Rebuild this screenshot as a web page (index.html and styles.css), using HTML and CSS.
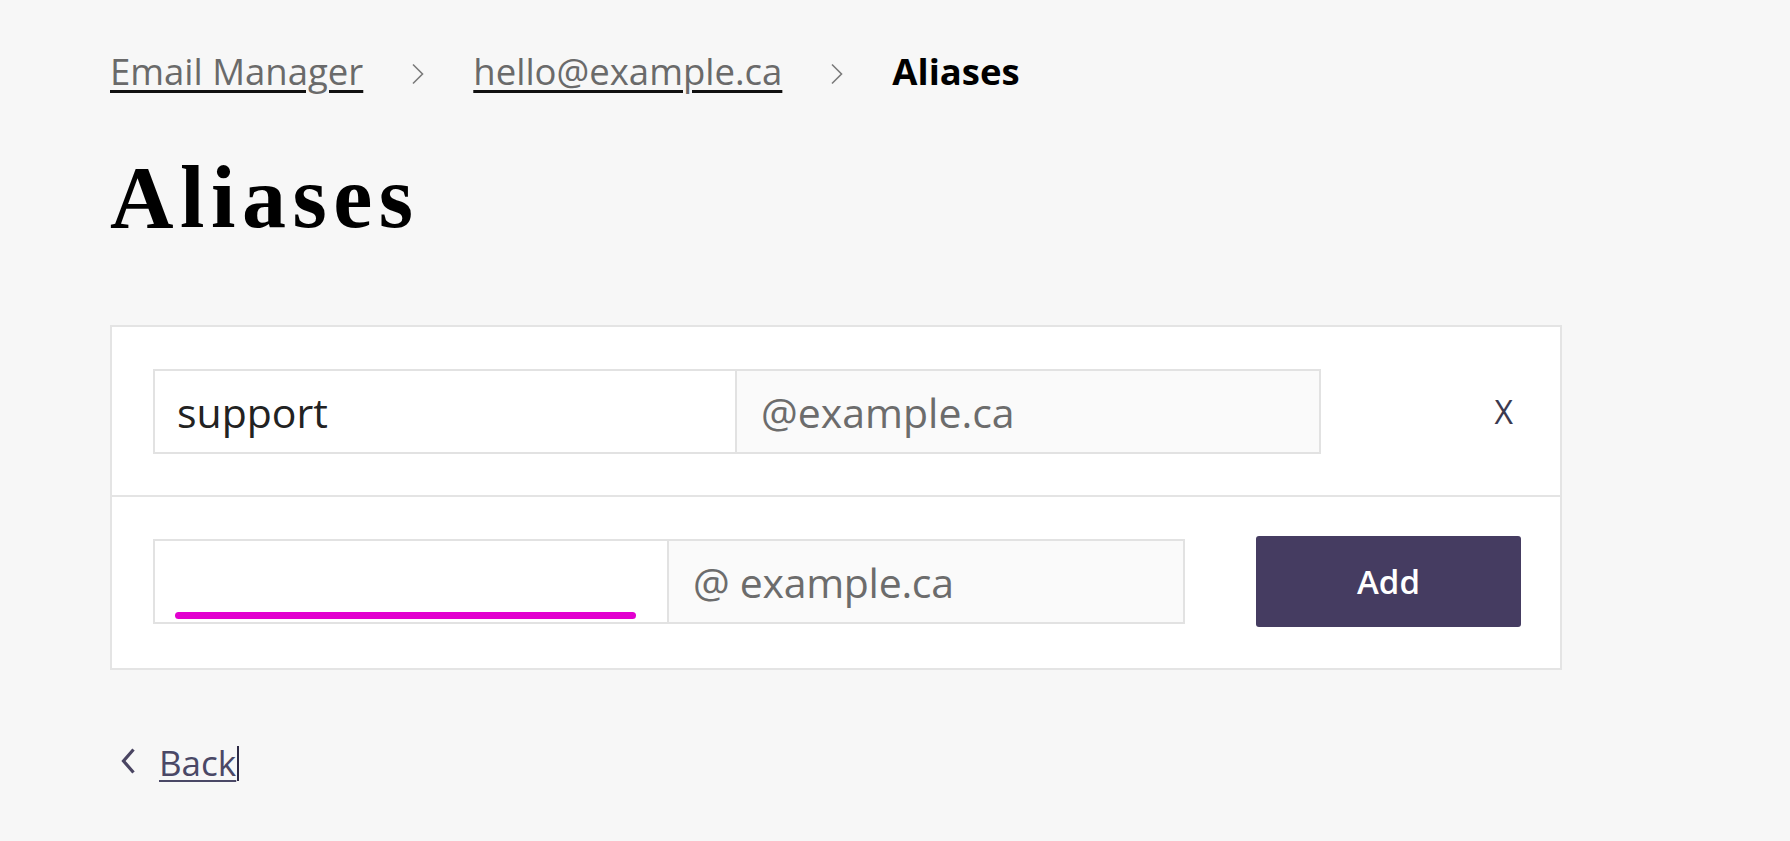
FILE: index.html
```html
<!DOCTYPE html>
<html lang="en">
<head>
<meta charset="utf-8">
<title>Aliases</title>
<link rel="stylesheet" href="styles.css">
</head>
<body>
<main class="page">
  <nav class="crumbs" aria-label="Breadcrumb">
    <a class="crumb-link" href="#">Email Manager</a>
    <span class="sep"><svg width="14" height="22" viewBox="0 0 14 22"><path d="M2 1.5 L11.5 11 L2 20.5" fill="none" stroke="#7a7a7a" stroke-width="1.6"/></svg></span>
    <a class="crumb-link" href="#">hello@example.ca</a>
    <span class="sep"><svg width="14" height="22" viewBox="0 0 14 22"><path d="M2 1.5 L11.5 11 L2 20.5" fill="none" stroke="#7a7a7a" stroke-width="1.6"/></svg></span>
    <span class="crumb-current">Aliases</span>
  </nav>

  <h1 class="title">Aliases</h1>

  <section class="card">
    <div class="row">
      <div class="fields fields-wide">
        <div class="box name">support</div>
        <div class="box suffix">@example.ca</div>
      </div>
      <button class="remove" type="button">X</button>
    </div>
    <div class="row row-last">
      <div class="fields fields-narrow">
        <div class="box name focused"><span class="focus-bar"></span></div>
        <div class="box suffix">@ example.ca</div>
      </div>
      <button class="add" type="button">Add</button>
    </div>
  </section>

  <a class="back" href="#">
    <svg class="back-icon" width="16" height="26" viewBox="0 0 16 26"><path d="M13.5 1.5 L3.5 13 L13.5 24.5" fill="none" stroke="#4a4562" stroke-width="3.2"/></svg>
    <span class="back-text">Back</span><span class="caret"></span>
  </a>
</main>
</body>
</html>
```

FILE: styles.css
```css
* { box-sizing: border-box; }

html, body {
  margin: 0;
  padding: 0;
  background: #f7f7f7;
}

body {
  font-family: "Open Sans", "Noto Sans", "Liberation Sans", sans-serif;
  color: #1b1b1b;
}

.page {
  padding: 46px 0 0 110px;
}

/* Breadcrumb */
.crumbs {
  display: flex;
  align-items: center;
  height: 50px;
  font-size: 36.5px;
  line-height: 50px;
}

.crumb-link {
  color: #6a6a6a;
  text-decoration: underline;
  text-decoration-color: #111;
  text-decoration-thickness: 3px;
  text-underline-offset: 5px;
}

.sep {
  display: flex;
  margin: 6px 48px 0 48px;
}

.crumb-current {
  font-weight: 700;
  color: #000;
}

/* Title */
.title {
  margin: 49px 0 0 0;
  font-family: "Liberation Serif", "Times New Roman", serif;
  font-weight: 700;
  font-size: 88px;
  line-height: 106px;
  letter-spacing: 6.5px;
  color: #000;
}

/* Card */
.card {
  margin-top: 74px;
  width: 1452px;
  background: #fff;
  border: 2px solid #e4e4e4;
}

.row {
  display: flex;
  align-items: center;
  padding: 42px 39px 41px 41px;
  border-bottom: 2px solid #e4e4e4;
}

.row-last {
  border-bottom: 0;
  padding-top: 39px;
  padding-bottom: 41px;
}

.fields {
  display: flex;
}

.fields-wide { width: 1168px; }
.fields-narrow { width: 1032px; }

.box {
  flex: 1 1 0;
  height: 85px;
  display: flex;
  align-items: center;
  font-size: 41px;
  border: 2px solid #e2e2e2;
}

.name {
  position: relative;
  background: #fff;
  color: #222;
  padding-left: 22px;
}

.suffix {
  background: #fafafa;
  color: #6c6c6c;
  border-left: 0;
  padding-left: 24px;
}

.fields-narrow .suffix {
  letter-spacing: -0.3px;
}

.focus-bar {
  position: absolute;
  left: 20px;
  right: 31px;
  bottom: 3px;
  height: 7px;
  border-radius: 4px;
  background: #e200cf;
}

.remove {
  margin-left: auto;
  padding: 0 8px 0 0;
  border: 0;
  background: transparent;
  font-family: inherit;
  font-size: 32px;
  line-height: 40px;
  color: #3c3a50;
  cursor: pointer;
}

.add {
  margin-left: auto;
  width: 265px;
  height: 91px;
  border: 0;
  border-radius: 3px;
  background: #453c61;
  color: #fff;
  font-family: inherit;
  font-size: 33px;
  font-weight: 600;
  line-height: 40px;
  padding: 0;
  cursor: pointer;
}

/* Back link */
.back {
  display: inline-flex;
  align-items: center;
  margin-top: 69px;
  margin-left: 10px;
  height: 48px;
  font-size: 35px;
  line-height: 48px;
  color: #4a4866;
  text-decoration: none;
}

.back-icon {
  margin-right: 23px;
  margin-top: -4px;
}

.back-text {
  text-decoration: underline;
  text-decoration-thickness: 2px;
  text-underline-offset: 4px;
}

.caret {
  display: inline-block;
  width: 2px;
  height: 35px;
  margin-left: 1px;
  background: #2d2a45;
}
```
